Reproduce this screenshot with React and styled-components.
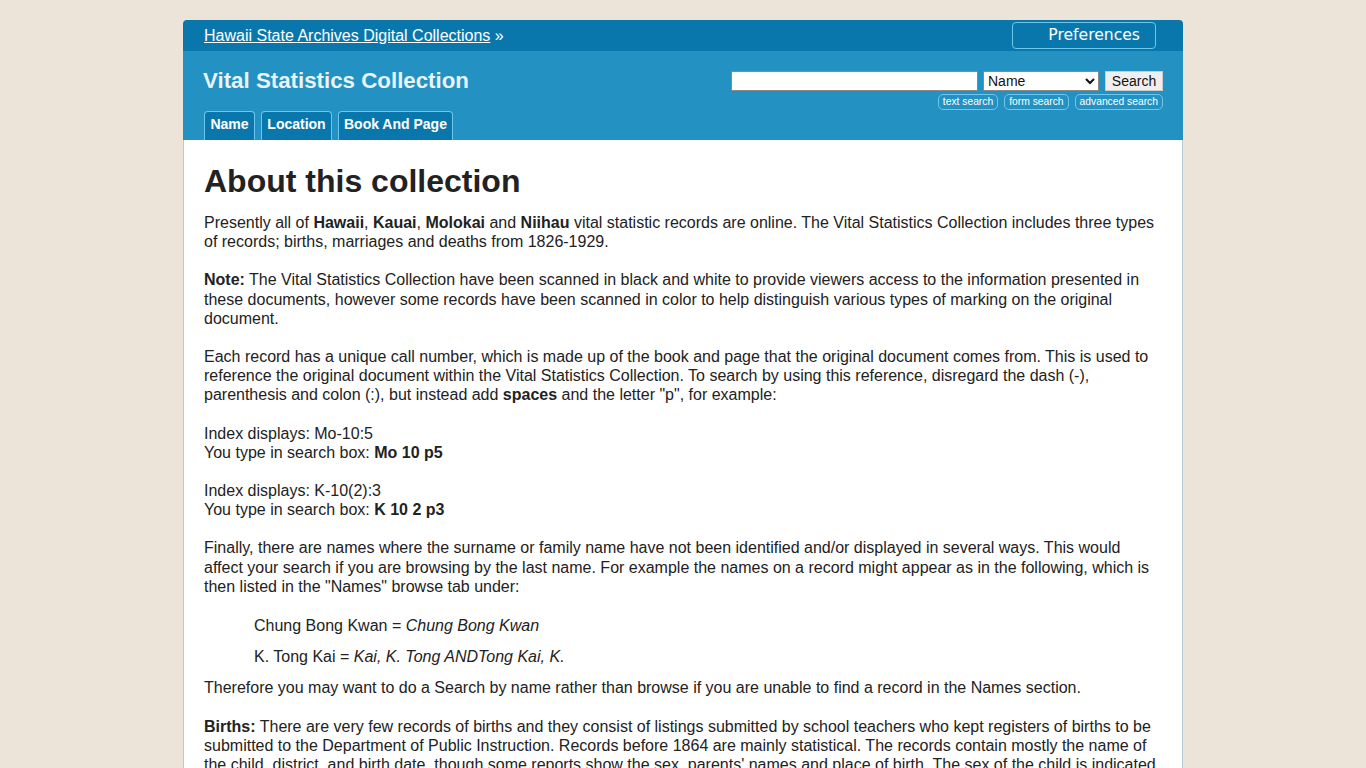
import React from "react";
import styled, { createGlobalStyle } from "styled-components";

const GlobalStyle = createGlobalStyle`
  html, body {
    margin: 0;
    padding: 0;
    background: #ece4d9;
    font-family: "Liberation Sans", Arial, sans-serif;
    color: #222;
  }
`;

const Page = styled.div`
  width: 1000px;
  margin: 20px auto 0;
`;

const TopBar = styled.div`
  height: 31px;
  background: #0a77ac;
  border-radius: 4px 4px 0 0;
  display: flex;
  align-items: center;
  justify-content: space-between;
  padding: 0 27px 0 21px;
`;

const Crumb = styled.div`
  color: #fff;
  font-size: 16px;
  a {
    color: #fff;
    text-decoration: underline;
  }
`;

const PrefButton = styled.a`
  box-sizing: border-box;
  width: 144px;
  height: 27px;
  border: 1px solid #6cc6ee;
  border-radius: 4px;
  color: #fff;
  font-family: "DejaVu Sans", Verdana, sans-serif;
  font-size: 15.6px;
  display: flex;
  align-items: center;
  justify-content: flex-end;
  padding: 0 15px 2px 0;
`;

const Header = styled.div`
  background: #2391c2;
  height: 89px;
  padding: 0 20px 0 20px;
  display: flex;
  justify-content: space-between;
`;

const HeaderLeft = styled.div`
  display: flex;
  flex-direction: column;
  justify-content: space-between;
`;

const Title = styled.h2`
  margin: 17px 0 0;
  font-size: 22.3px;
  font-weight: bold;
  color: #e8f4fa;
`;

const Tabs = styled.div`
  display: flex;
  gap: 6px;
  padding-left: 1px;
`;

const Tab = styled.a`
  box-sizing: border-box;
  height: 29px;
  padding: 4px 5px 0;
  min-width: ${({ w }) => w}px;
  background: #0a77ac;
  border: 1px solid #6cc6ee;
  border-bottom: none;
  border-radius: 4px 4px 0 0;
  color: #fff;
  font-size: 14px;
  font-weight: bold;
  text-align: center;
`;

const SearchArea = styled.div`
  margin-top: 20px;
  display: flex;
  flex-direction: column;
  align-items: flex-end;
  gap: 3px;
`;

const SearchRow = styled.div`
  display: flex;
  align-items: center;
  gap: 5px;
`;

const Input = styled.input`
  box-sizing: border-box;
  width: 247px;
  height: 20px;
  border: 1px solid #888;
  background: #fff;
  padding: 0 2px;
`;

const Select = styled.select`
  box-sizing: border-box;
  width: 116px;
  height: 20px;
  font-family: "Liberation Sans", Arial, sans-serif;
  font-size: 14px;
  border: 1px solid #888;
  background: #fff;
  color: #111;
`;

const Button = styled.button`
  box-sizing: border-box;
  width: 58px;
  height: 20px;
  margin-left: 1px;
  font-family: "Liberation Sans", Arial, sans-serif;
  font-size: 14px;
  border: 1px solid #ccc;
  background: #efefef;
  color: #111;
  padding: 0;
`;

const LinkRow = styled.div`
  display: flex;
  gap: 6px;
`;

const SmallLink = styled.a`
  box-sizing: border-box;
  height: 16px;
  padding: 0 4px;
  border: 1px solid #6cc6ee;
  border-radius: 5px;
  color: #fff;
  font-size: 10.3px;
  line-height: 14px;
`;

const Content = styled.div`
  background: #fff;
  border-left: 1px solid #b9c9d4;
  border-right: 1px solid #b9c9d4;
  padding: 23px 20px 20px;
  font-size: 16px;
  line-height: 19.2px;
`;

const H1 = styled.h1`
  margin: 0 0 13px;
  font-size: 32px;
  line-height: 37px;
  font-weight: bold;
  color: #222;
`;

const P = styled.p`
  margin: 0 0 ${({ last }) => (last ? "0" : "19px")};
`;

const Example = styled.div`
  padding-left: 50px;
  margin: ${({ first }) => (first ? "20px" : "0")} 0 12px;
`;

export default function App() {
  return (
    <>
      <GlobalStyle />
      <Page>
        <TopBar>
          <Crumb>
            <a href="#">Hawaii State Archives Digital Collections</a> »
          </Crumb>
          <PrefButton>Preferences</PrefButton>
        </TopBar>
        <Header>
          <HeaderLeft>
            <Title>Vital Statistics Collection</Title>
            <Tabs>
              <Tab w={51}>Name</Tab>
              <Tab w={71}>Location</Tab>
              <Tab w={114}>Book And Page</Tab>
            </Tabs>
          </HeaderLeft>
          <SearchArea>
            <SearchRow>
              <Input type="text" />
              <Select defaultValue="Name">
                <option>Name</option>
                <option>Location</option>
                <option>Book And Page</option>
              </Select>
              <Button>Search</Button>
            </SearchRow>
            <LinkRow>
              <SmallLink>text search</SmallLink>
              <SmallLink>form search</SmallLink>
              <SmallLink>advanced search</SmallLink>
            </LinkRow>
          </SearchArea>
        </Header>
        <Content>
          <H1>About this collection</H1>
          <P>
            Presently all of <b>Hawaii</b>, <b>Kauai</b>, <b>Molokai</b> and{" "}
            <b>Niihau</b> vital statistic records are online. The Vital
            Statistics Collection includes three types of records; births,
            marriages and deaths from 1826-1929.
          </P>
          <P>
            <b>Note:</b> The Vital Statistics Collection have been scanned in
            black and white to provide viewers access to the information
            presented in these documents, however some records have been
            scanned in color to help distinguish various types of marking on
            the original document.
          </P>
          <P>
            Each record has a unique call number, which is made up of the book
            and page that the original document comes from. This is used to
            reference the original document within the Vital Statistics
            Collection. To search by using this reference, disregard the dash
            (-), parenthesis and colon (:), but instead add <b>spaces</b> and
            the letter "p", for example:
          </P>
          <P>
            Index displays: Mo-10:5
            <br />
            You type in search box: <b>Mo 10 p5</b>
          </P>
          <P>
            Index displays: K-10(2):3
            <br />
            You type in search box: <b>K 10 2 p3</b>
          </P>
          <P last>
            Finally, there are names where the surname or family name have not
            been identified and/or displayed in several ways. This would affect
            your search if you are browsing by the last name. For example the
            names on a record might appear as in the following, which is then
            listed in the "Names" browse tab under:
          </P>
          <Example first>
            Chung Bong Kwan = <i>Chung Bong Kwan</i>
          </Example>
          <Example>
            K. Tong Kai = <i>Kai, K. Tong ANDTong Kai, K.</i>
          </Example>
          <P>
            Therefore you may want to do a Search by name rather than browse if
            you are unable to find a record in the Names section.
          </P>
          <P>
            <b>Births:</b> There are very few records of births and they
            consist of listings submitted by school teachers who kept registers
            of births to be submitted to the Department of Public Instruction.
            Records before 1864 are mainly statistical. The records contain
            mostly the name of the child, district, and birth date, though some
            reports show the sex, parents' names and place of birth. The sex of
            the child is indicated in some records.
          </P>
        </Content>
      </Page>
    </>
  );
}
